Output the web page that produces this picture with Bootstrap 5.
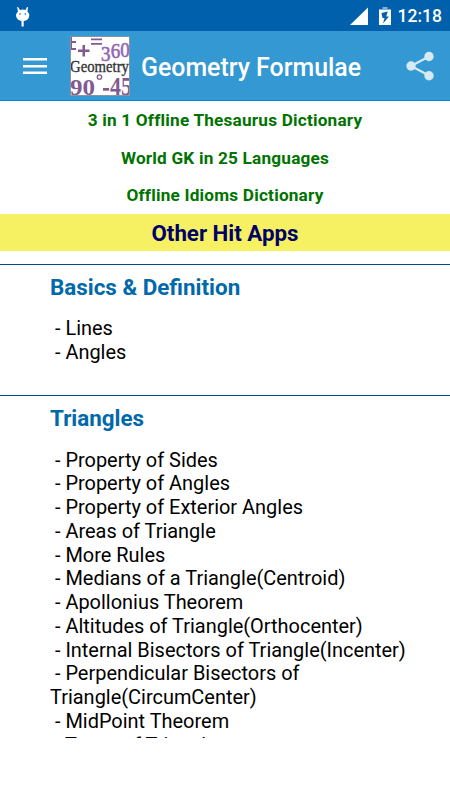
<!DOCTYPE html>
<html lang="en">
<head>
<meta charset="utf-8">
<meta name="viewport" content="width=device-width, initial-scale=1">
<title>Geometry Formulae</title>
<link href="https://cdn.jsdelivr.net/npm/bootstrap@5.3.0/dist/css/bootstrap.min.css" rel="stylesheet">
<style>
body{font-family:Roboto,"Liberation Sans",sans-serif;color:#000;background:#fff;height:800px;overflow:hidden}
.status-bar{height:31px;background:#0060ac;color:#fff;font-size:17.5px;font-weight:500;padding:0 8px 0 14px}
.signal{margin-right:9px}
.clock{margin-left:6px;padding-top:2px}
.app-bar{height:70px;background:#3498d2;border-bottom:1px solid #0a88cc;padding:0 15px 0 23px}
.app-title{font-size:24.9px;font-weight:500;color:#fff;line-height:30px;margin-left:11px;padding-top:4.5px}
.menu-icon{margin-right:23px}
.promo{height:37.5px;font-size:17.2px;font-weight:700;letter-spacing:.2px;color:#007300;padding-top:3px}
.promo-hit{height:37.5px;background:#f6f163;color:#000066;font-size:22.3px;font-weight:700;padding-top:3px}
.content{height:487px;padding-top:13px}
.topic{border-top:1px solid #004a94;padding:7.3px 40px 0 50px;height:131.2px}
.topic h2{font-size:22.4px;line-height:30px;font-weight:700;color:#0069aa;margin:0 0 15.1px}
.topic li{font-size:19.95px;line-height:23.77px;white-space:pre-wrap}
</style>
<script src="https://cdn.jsdelivr.net/npm/bootstrap@5.3.0/dist/js/bootstrap.bundle.min.js"></script>
</head>
<body class="d-flex flex-column m-0">
<div class="status-bar d-flex align-items-center justify-content-between flex-shrink-0">
  <svg width="18" height="26" viewBox="0 0 18 26" fill="#fff"><path d="M3 4 4 4 6 7Q9 6.200 11.500 7L13 4 14 4 13.500 8.500Q15.500 10.500 15.300 13Q14.500 18 8.800 18Q3 18 2 13Q2 10.500 4 8.500Z"/><rect x="7.500" y="18" width="2.200" height="5.500"/><circle cx="6" cy="11" r=".8" fill="#0060ac"/><circle cx="11.300" cy="11" r=".8" fill="#0060ac"/></svg>
  <div class="d-flex align-items-center">
    <svg class="signal" width="20" height="20" viewBox="0 0 20 20"><path d="M19 1.500V19H1Z" fill="#fff"/></svg>
    <svg width="14" height="20" viewBox="0 0 14 20"><path d="M4.500 1H9.500V3H13V5H1V3H4.500Z" fill="#82b2d8"/><path d="M1 4H13V19H1Z" fill="#fff"/><path d="M9.800 5.500 3.500 7 4.500 12H6.500L5 17.500 11 10.500H8.200Z" fill="#0060ac"/></svg>
    <span class="clock">12:18</span>
  </div>
</div>
<nav class="app-bar d-flex align-items-center flex-shrink-0">
  <svg class="menu-icon flex-shrink-0" width="24" height="18" viewBox="0 0 24 18" fill="#fff"><path d="M0 1H24V3.500H0ZM0 8H24V10.500H0ZM0 14.500H24V17H0Z"/></svg>
  <svg class="flex-shrink-0" width="60" height="60" viewBox="0 0 60 60" font-family="Liberation Serif, serif" font-weight="700">
    <rect width="60" height="60" fill="#fff"/>
    <g fill="#805a90">
      <path d="M0 1H2V5H6V7H2V12H6V14H0ZM21 2.500H32V4.300H21ZM21 7H32V8.800H21ZM12.500 9H15V13.500H19.500V16H15V20.500H12.500V16H8V13.500H12.500Z"/>
      <g font-size="21" font-weight="400" fill="#9166b4" stroke="#9166b4" stroke-width=".6"><text x="31" y="24.500" textLength="9.500" lengthAdjust="spacingAndGlyphs">3</text><text x="40.800" y="21.500" textLength="9.500" lengthAdjust="spacingAndGlyphs">6</text><text x="50.300" y="20.500" textLength="9.500" lengthAdjust="spacingAndGlyphs">0</text></g>
      <text x="0" y="58.500" font-size="23.500" textLength="25" lengthAdjust="spacingAndGlyphs">90</text>
      <path d="M33 52H39V54.700H33Z"/>
      <text x="40" y="58.500" font-size="25" textLength="22" lengthAdjust="spacingAndGlyphs">45</text>
    </g>
    <circle cx="29.500" cy="41" r="2.200" fill="none" stroke="#805a90" stroke-width="1.300"/>
    <text x="0" y="35.500" font-size="17" font-weight="400" fill="#333" stroke="#333" stroke-width=".35" textLength="59" lengthAdjust="spacingAndGlyphs">Geometry</text>
    <rect x=".5" y=".5" width="59" height="59" fill="none" stroke="#8794a2" stroke-width="1"/>
  </svg>
  <span class="app-title text-nowrap">Geometry Formulae</span>
  <svg class="ms-auto flex-shrink-0" width="30" height="30" viewBox="0 0 30 30" fill="#d6eaf6"><path d="M24 5.500 6 15 24 24.500" fill="none" stroke="#d6eaf6" stroke-width="2.200"/><circle cx="24" cy="5.500" r="4.700"/><circle cx="6" cy="15" r="4.700"/><circle cx="24" cy="24.700" r="4.700"/></svg>
</nav>
<div class="flex-shrink-0 text-center">
  <div class="promo d-flex align-items-center justify-content-center"><span>3 in 1 Offline Thesaurus Dictionary</span></div>
  <div class="promo d-flex align-items-center justify-content-center"><span>World GK in 25 Languages</span></div>
  <div class="promo d-flex align-items-center justify-content-center"><span>Offline Idioms Dictionary</span></div>
  <div class="promo-hit d-flex align-items-center justify-content-center"><span>Other Hit Apps</span></div>
</div>
<main class="content overflow-hidden flex-shrink-0">
  <section class="topic">
    <h2>Basics &amp; Definition</h2>
    <ul class="list-unstyled m-0"><li> - Lines</li><li> - Angles</li></ul>
  </section>
  <section class="topic">
    <h2>Triangles</h2>
    <ul class="list-unstyled m-0"><li> - Property of Sides</li><li> - Property of Angles</li><li> - Property of Exterior Angles</li><li> - Areas of Triangle</li><li> - More Rules</li><li> - Medians of a Triangle(Centroid)</li><li> - Apollonius Theorem</li><li> - Altitudes of Triangle(Orthocenter)</li><li> - Internal Bisectors of Triangle(Incenter)</li><li> - Perpendicular Bisectors of Triangle(CircumCenter)</li><li> - MidPoint Theorem</li><li> - Types of Triangle</li></ul>
  </section>
</main>
</body>
</html>
